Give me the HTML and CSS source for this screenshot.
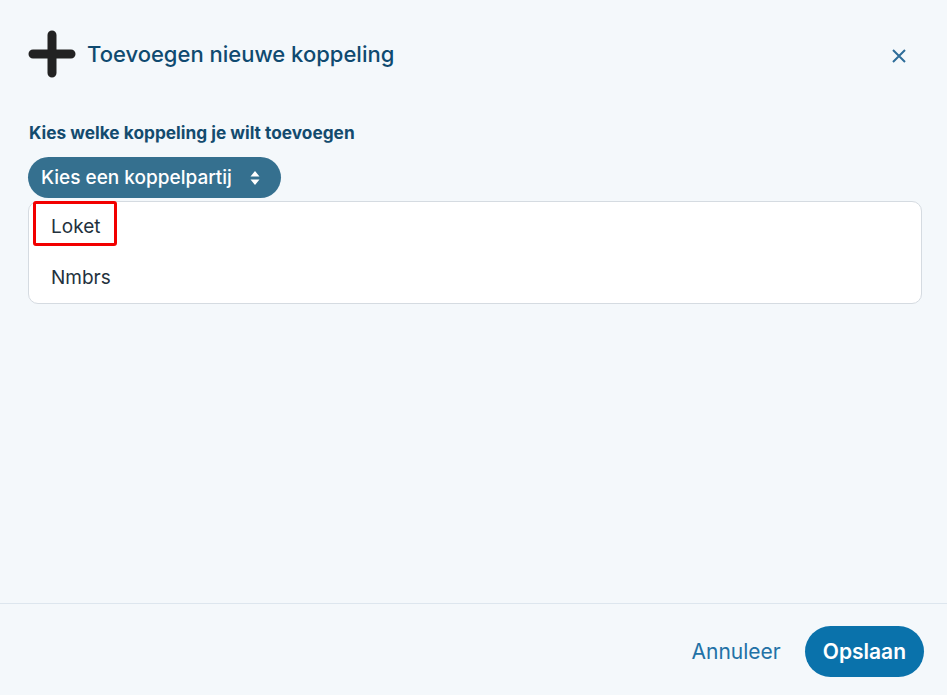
FILE: index.html
```html
<!DOCTYPE html>
<html lang="nl">
<head>
    <meta charset="UTF-8">
    <meta name="viewport" content="width=device-width, initial-scale=1.0">
    <title>Toevoegen nieuwe koppeling</title>
    <link rel="stylesheet" href="styles.css">
</head>
<body>
    <div class="modal">
        <div class="modal-header">
            <svg class="header-icon" width="48" height="48" viewBox="0 0 48 48">
                <path d="M24 5 V43 M5 24 H43" stroke="#222" stroke-width="9" stroke-linecap="round" fill="none"/>
            </svg>
            <h1 class="modal-title">Toevoegen nieuwe koppeling</h1>
            <button class="close-btn" aria-label="Sluiten">
                <svg width="16" height="16" viewBox="0 0 16 16">
                    <path d="M2 2 L14 14 M14 2 L2 14" stroke="#2e6d99" stroke-width="2" fill="none"/>
                </svg>
            </button>
        </div>
        <div class="modal-body">
            <label class="field-label">Kies welke koppeling je wilt toevoegen</label>
            <button class="select-pill">
                Kies een koppelpartij
                <svg class="select-arrows" width="10" height="16" viewBox="0 0 10 16">
                    <path d="M5 1 L9.5 6.5 H0.5 Z M5 15 L9.5 9.5 H0.5 Z" fill="#fff"/>
                </svg>
            </button>
            <ul class="option-list">
                <li class="option option-marked">Loket</li>
                <li class="option">Nmbrs</li>
            </ul>
        </div>
        <div class="modal-footer">
            <button class="btn-link">Annuleer</button>
            <button class="btn-primary">Opslaan</button>
        </div>
    </div>
</body>
</html>
```

FILE: styles.css
```css
body {
    margin: 0;
    font-family: 'Inter', 'Roboto', sans-serif;
    background-color: #f4f8fb;
    color: #23313d;
}
.modal {
    display: flex;
    flex-direction: column;
    height: 695px;
}
.modal-header {
    display: flex;
    align-items: center;
    padding: 29px 40px 0 28px;
    height: 49px;
}
.header-icon {
    flex: none;
}
.modal-title {
    flex: 1;
    margin: 0 0 0 11px;
    font-size: 22px;
    font-weight: 500;
    color: #0f4a70;
}
.close-btn {
    border: none;
    background: none;
    padding: 0;
    width: 16px;
    height: 16px;
    cursor: pointer;
    margin-top: 4px;
}
.modal-body {
    flex: 1;
    padding: 44px 25px 0 28px;
}
.field-label {
    display: block;
    font-size: 17.3px;
    font-weight: 700;
    color: #134b6e;
    margin-left: 1px;
}
.select-pill {
    display: inline-flex;
    align-items: center;
    gap: 18px;
    margin-top: 14px;
    height: 41px;
    padding: 0 21px 0 13px;
    border: none;
    border-radius: 21px;
    background-color: #35708f;
    color: #fff;
    font-family: inherit;
    font-size: 19px;
    font-weight: 500;
    cursor: pointer;
}
.option-list {
    list-style: none;
    margin: 3px 0 0;
    padding: 0;
    background-color: #fff;
    border: 1px solid #d5dbe1;
    border-radius: 10px;
}
.option {
    font-size: 19px;
    padding: 0 0 0 22px;
    height: 50px;
    line-height: 50px;
}
.option:first-child {
    height: 51px;
}
.option-marked {
    position: relative;
}
.option-marked::after {
    content: "";
    position: absolute;
    left: 4px;
    top: -1px;
    width: 78px;
    height: 39px;
    border: 3px solid #f20000;
    border-radius: 3px;
}
.modal-footer {
    display: flex;
    justify-content: flex-end;
    align-items: flex-start;
    gap: 24px;
    height: 92px;
    padding: 22px 23px 0 0;
    box-sizing: border-box;
    border-top: 1px solid #dde6ee;
}
.btn-link {
    border: none;
    background: none;
    font-family: inherit;
    font-size: 21px;
    color: #2271a6;
    cursor: pointer;
    padding: 0;
    height: 51px;
}
.btn-primary {
    height: 51px;
    padding: 0 18px;
    border: none;
    border-radius: 26px;
    background-color: #0a72ab;
    color: #fff;
    font-family: inherit;
    font-size: 21px;
    font-weight: 600;
    cursor: pointer;
}
```
